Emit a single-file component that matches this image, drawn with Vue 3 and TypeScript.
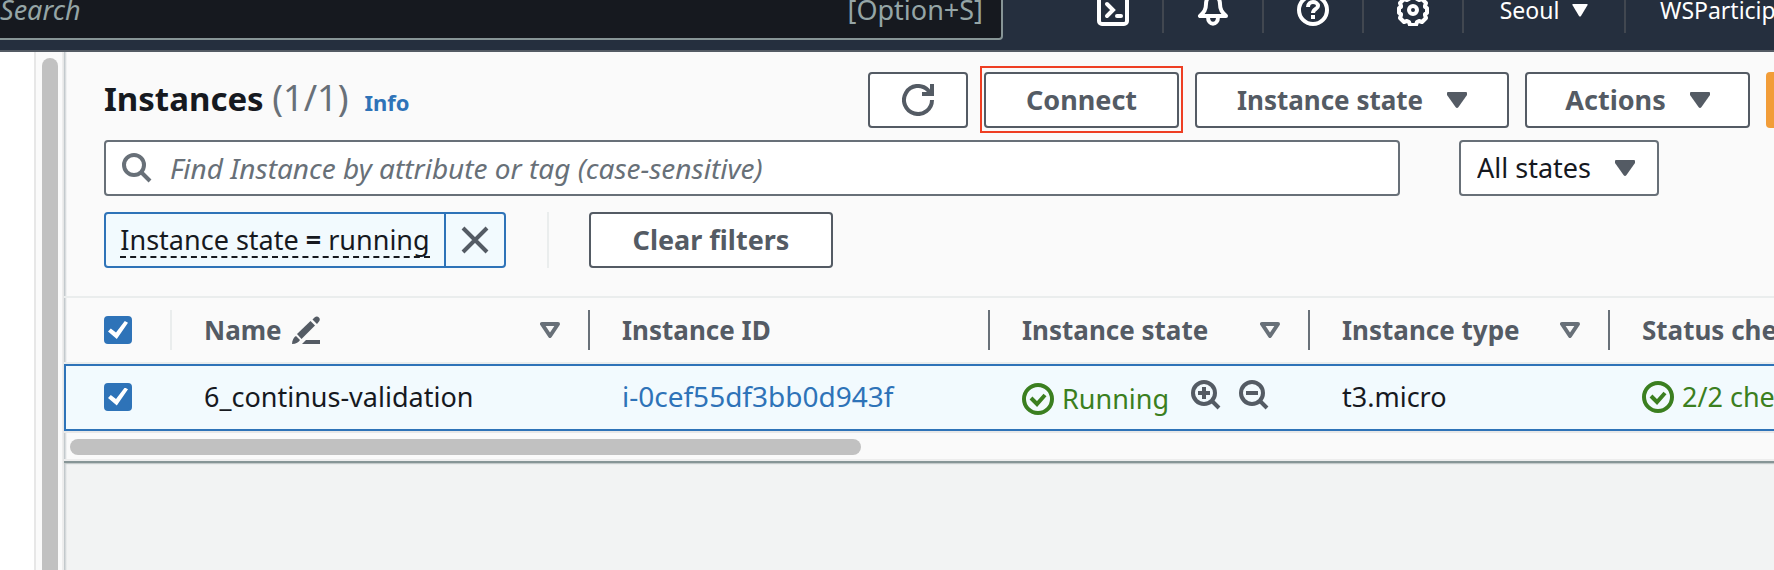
<script setup lang="ts">
import { ref } from 'vue'

interface Column {
  key: string
  label: string
  sortable: boolean
  editable?: boolean
}

const columns: Column[] = [
  { key: 'name', label: 'Name', sortable: true, editable: true },
  { key: 'id', label: 'Instance ID', sortable: false },
  { key: 'state', label: 'Instance state', sortable: true },
  { key: 'type', label: 'Instance type', sortable: true },
  { key: 'status', label: 'Status check', sortable: false },
]

const allSelected = ref(true)
const rowSelected = ref(true)
const query = ref('')
const stateFilter = ref('all')
</script>

<template>
  <div class="app">
    <header class="topbar">
      <div class="topbar-inner">
        <label class="global-search">
          <input type="search" placeholder="Search" aria-label="Search" />
          <span class="shortcut">[Option+S]</span>
        </label>
        <nav class="tools">
          <button class="tool" type="button" aria-label="CloudShell">
            <svg viewBox="0 0 32 32" width="32" height="32" fill="none" stroke="#fff" stroke-width="4">
              <rect x="2" y="2" width="28" height="28" rx="3" />
              <path d="M10 10l6 6-6 6" stroke-linecap="round" />
              <path d="M20 22h4" stroke-linecap="round" />
            </svg>
          </button>
          <button class="tool" type="button" aria-label="Notifications">
            <svg viewBox="0 0 32 32" width="32" height="32" fill="none" stroke="#fff" stroke-width="4" stroke-linejoin="round">
              <path d="M16 2c-5 0-7 4-7 8 0 6-2 8-6 12h26c-4-4-6-6-6-12 0-4-2-8-7-8z" />
              <path d="M11 23c0 9 10 9 10 0" />
            </svg>
          </button>
          <button class="tool" type="button" aria-label="Help">
            <svg viewBox="0 0 32 32" width="32" height="32" fill="none" stroke="#fff" stroke-width="4">
              <circle cx="16" cy="16" r="14" />
              <path d="M11 13c0-7 10-6 10-1 0 3-5 3-5 7" />
              <path d="M16 21v4" />
            </svg>
          </button>
          <button class="tool" type="button" aria-label="Settings">
            <svg viewBox="0 0 32 32" width="32" height="32" fill="none" stroke="#fff" stroke-width="4" stroke-linejoin="round">
              <path d="M13 2h6l1 3 2 1 3-1 4 4-1 3 0 1 2 1v5l-2 1 0 1 1 3-4 4-3-1-2 1-1 3h-6l-1-3-2-1-3 1-4-4 1-3 0-1-2-1v-5l2-1 0-1-1-3 4-4 3 1 2-1z" />
              <circle cx="16" cy="16" r="4" />
            </svg>
          </button>
          <button class="tool region" type="button">
            Seoul
            <svg viewBox="0 0 16 13" width="16" height="13" fill="#fff"><path d="M1 0h14q1 0 .6 1L9 12q-1 1-2 0L.4 1Q0 0 1 0z" /></svg>
          </button>
          <button class="tool account" type="button">WSParticipantRole</button>
        </nav>
      </div>
    </header>

    <div class="body">
      <aside class="side"><div class="side-track"><div class="side-thumb"></div></div></aside>

      <main class="content">
        <section class="panel">
          <div class="toolbar">
            <div class="title-row">
              <div class="title">
                <h1>Instances <span class="count">(1/1)</span></h1>
                <a class="info" href="#">Info</a>
              </div>
              <div class="actions">
                <button class="btn refresh" type="button" aria-label="Refresh">
                  <svg viewBox="0 0 32 32" width="32" height="32" fill="none" stroke="#545b64" stroke-width="4">
                    <path d="M30 16A14 14 0 1 1 26 6.200L29 10" />
                    <path d="M30 0v10H20" />
                  </svg>
                </button>
                <span class="highlight"><button class="btn connect" type="button">Connect</button></span>
                <button class="btn state-menu" type="button">
                  Instance state
                  <svg class="caret" viewBox="0 0 20 16" width="20" height="16"><path d="M1 0h18q1 0 1 1v2l-8.500 12q-1.500 2-3 0L0 3V1q0-1 1-1z" /></svg>
                </button>
                <button class="btn actions-menu" type="button">
                  Actions
                  <svg class="caret" viewBox="0 0 20 16" width="20" height="16"><path d="M1 0h18q1 0 1 1v2l-8.500 12q-1.500 2-3 0L0 3V1q0-1 1-1z" /></svg>
                </button>
                <button class="launch" type="button" aria-label="Launch instances"></button>
              </div>
            </div>

            <div class="search-row">
              <label class="search">
                <svg viewBox="0 0 30 30" width="30" height="30" fill="none" stroke="#687078" stroke-width="4">
                  <circle cx="12" cy="12" r="10" />
                  <path d="M19 19l9 9" />
                </svg>
                <input v-model="query" type="text" placeholder="Find Instance by attribute or tag (case-sensitive)" aria-label="Find Instance" />
              </label>
              <div class="select">
                <select v-model="stateFilter" aria-label="State">
                  <option value="all">All states</option>
                </select>
                <svg class="caret select-caret" viewBox="0 0 20 16" width="20" height="16"><path d="M1 0h18q1 0 1 1v2l-8.500 12q-1.500 2-3 0L0 3V1q0-1 1-1z" /></svg>
              </div>
            </div>

            <div class="filter-row">
              <div class="token">
                <button class="token-label" type="button"><span>Instance state <b>=</b> running</span></button>
                <button class="token-remove" type="button" aria-label="Remove filter">
                  <svg viewBox="0 0 28 28" width="28" height="28" fill="none" stroke="#545b64" stroke-width="4"><path d="M2 2l24 24M26 2L2 26" /></svg>
                </button>
              </div>
              <div class="filter-clear"><button class="btn clear" type="button">Clear filters</button></div>
            </div>
          </div>

          <div class="table-wrap">
            <table>
              <colgroup>
                <col class="w-check" /><col class="w-name" /><col class="w-id" /><col class="w-state" /><col class="w-type" /><col />
              </colgroup>
              <thead>
                <tr>
                  <th class="check-cell">
                    <div class="head light">
                      <input v-model="allSelected" type="checkbox" aria-label="Select all instances" />
                    </div>
                  </th>
                  <th v-for="col in columns" :key="col.key">
                    <div class="head">
                      <span>{{ col.label }}</span>
                      <svg v-if="col.editable" class="pencil" viewBox="0 0 28 28" width="28" height="28" fill="#545b64">
                        <path d="M0 28c0-4 2-7 4-8l4 4c-1 2-4 4-8 4z" />
                        <path d="M5 18L18.500 5l4.500 4.500L9.500 23z" />
                        <path d="M20.500 3.500l2-2c3-3 7 1 4.500 4l-2 2.500z" />
                        <path d="M14 24h14v4H10z" />
                      </svg>
                      <svg v-if="col.sortable" class="sort" viewBox="0 0 20 16" width="20" height="16" fill="none" stroke="#687078" stroke-width="4" stroke-linejoin="round">
                        <path d="M2 2h16l-8 12z" />
                      </svg>
                    </div>
                  </th>
                </tr>
              </thead>
              <tbody>
                <tr>
                  <td class="check-cell"><input v-model="rowSelected" type="checkbox" aria-label="Select 6_continus-validation" /></td>
                  <td>6_continus-validation</td>
                  <td><a class="instance-link" href="#">i-0cef55df3bb0d943f</a></td>
                  <td>
                    <div class="state">
                      <span class="ok">
                        <svg viewBox="0 0 32 32" width="32" height="32" fill="none" stroke="#3b7f20" stroke-width="4"><circle cx="16" cy="16" r="14" /><path d="M9 15l6 6 8-9" /></svg>
                        Running
                      </span>
                      <button class="zoom" type="button" aria-label="Filter by this value">
                        <svg viewBox="0 0 30 30" width="30" height="30" fill="none" stroke="#545b64" stroke-width="4"><circle cx="13" cy="13" r="11" /><path d="M21 21l7 7M7 13h12M13 7v12" /></svg>
                      </button>
                      <button class="zoom" type="button" aria-label="Exclude this value">
                        <svg viewBox="0 0 30 30" width="30" height="30" fill="none" stroke="#545b64" stroke-width="4"><circle cx="13" cy="13" r="11" /><path d="M21 21l7 7M7 13h12" /></svg>
                      </button>
                    </div>
                  </td>
                  <td>t3.micro</td>
                  <td>
                    <span class="ok">
                      <svg viewBox="0 0 32 32" width="32" height="32" fill="none" stroke="#3b7f20" stroke-width="4"><circle cx="16" cy="16" r="14" /><path d="M9 15l6 6 8-9" /></svg>
                      2/2 checks passed
                    </span>
                  </td>
                </tr>
              </tbody>
            </table>
          </div>
          <div class="hscroll"><div class="hscroll-thumb"></div></div>
        </section>
      </main>
    </div>
  </div>
</template>

<style>
body {
  margin: 0;
  overflow: hidden;
}
</style>

<style scoped>
.app {
  display: flex;
  flex-direction: column;
  height: 100vh;
  overflow: hidden;
  font-family: "Noto Sans", "Open Sans", sans-serif;
  font-size: 27px;
  line-height: 36px;
  color: #16191f;
}
.app * {
  box-sizing: border-box;
}
button,
input,
select {
  font: inherit;
  color: inherit;
  margin: 0;
}
button {
  padding: 0;
  border: 0;
  background: none;
  white-space: nowrap;
  cursor: pointer;
}
svg {
  display: block;
  flex: none;
}
a {
  color: #2e73b8;
  text-decoration: none;
}

/* Top navigation, scrolled partly out of view */
.topbar {
  display: flex;
  align-items: flex-end;
  flex: none;
  height: 52px;
  overflow: hidden;
  background: #252f3e;
  border-bottom: 2px solid #545b64;
}
.topbar-inner {
  display: flex;
  align-items: center;
  flex: 1;
  min-width: 0;
  height: 80px;
}
.global-search {
  display: flex;
  align-items: center;
  flex: 1;
  height: 60px;
  padding-right: 18px;
  background: #16191f;
  border: 2px solid #879596;
  border-left: 0;
  border-radius: 0 4px 4px 0;
  color: #95a5a6;
}
.global-search input {
  flex: 1;
  min-width: 0;
  padding: 0;
  border: 0;
  outline: 0;
  background: none;
}
.global-search input::placeholder {
  color: #95a5a6;
  font-style: italic;
  opacity: 1;
}
.tools {
  display: flex;
  align-items: center;
  width: 710px;
  margin-left: 61px;
  overflow: hidden;
  font-size: 23px;
  color: #fff;
}
.tool {
  display: flex;
  align-items: center;
  justify-content: center;
  flex: none;
  width: 100px;
  height: 46px;
  border-right: 2px solid #414750;
}
.region {
  width: 162px;
  gap: 13px;
}
.account {
  width: auto;
  padding-left: 34px;
  border-right: 0;
}

.body {
  display: flex;
  flex: 1;
  min-height: 0;
}
.side {
  display: flex;
  justify-content: flex-end;
  flex: none;
  width: 64px;
  background: #fff;
}
.side-track {
  width: 30px;
  padding: 6px 4px 0 6px;
  background: #fafafa;
  border-left: 2px solid #e7e7e7;
  border-right: 2px solid #ededed;
}
.side-thumb {
  width: 16px;
  height: 100%;
  background: #c1c1c1;
  border-radius: 8px 8px 0 0;
}

.content {
  flex: 1;
  min-width: 0;
  background: linear-gradient(90deg, #b9c0c4, transparent 3px) #f2f3f3;
}
.panel {
  background: linear-gradient(90deg, #b9c0c4, transparent 3px) #fafafa;
  border-bottom: 2px solid #879596;
  box-shadow: 0 1px 1px #c4caca;
}
.toolbar {
  display: flex;
  flex-direction: column;
  gap: 12px;
  padding: 20px 0 28px 40px;
}

.title-row {
  display: flex;
  align-items: center;
  height: 56px;
}
.title {
  display: flex;
  align-items: baseline;
  gap: 16px;
  padding-bottom: 4px;
}
h1 {
  margin: 0;
  font-size: 33px;
  line-height: 48px;
  font-weight: 700;
}
.count {
  font-size: 36px;
  font-weight: 400;
  color: #687078;
}
.info {
  font-size: 22px;
  font-weight: 700;
}
.actions {
  display: flex;
  align-items: center;
  gap: 16px;
  margin-left: auto;
}
.btn {
  display: flex;
  align-items: center;
  justify-content: center;
  height: 56px;
  background: #fff;
  border: 2px solid #545b64;
  border-radius: 4px;
  color: #545b64;
  font-weight: 700;
}
.refresh {
  width: 100px;
}
.highlight {
  padding: 4px 2px 3px;
  margin: -6px -4px -5px;
  border: 2px solid #ee3e23;
}
.connect {
  width: 195px;
}
.state-menu {
  width: 314px;
  gap: 24px;
  font-size: 26px;
}
.actions-menu {
  width: 225px;
  gap: 24px;
}
.caret {
  fill: #545b64;
}
.launch {
  width: 8px;
  height: 56px;
  background: #f29d38;
  border-radius: 4px 0 0 4px;
}

.search-row {
  display: flex;
  gap: 59px;
  padding-right: 115px;
}
.search {
  display: flex;
  align-items: center;
  flex: 1;
  gap: 18px;
  height: 56px;
  padding: 0 16px;
  background: #fff;
  border: 2px solid #687078;
  border-radius: 4px;
}
.search input {
  flex: 1;
  min-width: 0;
  padding: 0;
  border: 0;
  outline: 0;
  background: none;
  font-size: 28px;
}
.search input::placeholder {
  color: #687078;
  font-style: italic;
  opacity: 1;
}
.select {
  display: grid;
  align-items: center;
  width: 200px;
}
.select select {
  grid-area: 1 / 1;
  width: 100%;
  height: 56px;
  padding: 0 16px;
  appearance: none;
  background: #fff;
  border: 2px solid #687078;
  border-radius: 4px;
}
.select-caret {
  grid-area: 1 / 1;
  justify-self: end;
  margin-right: 24px;
  pointer-events: none;
}

.filter-row {
  display: flex;
  gap: 41px;
  padding-top: 4px;
}
.token {
  display: flex;
  height: 56px;
  background: #f2fafe;
  border: 2px solid #2e73b8;
  border-radius: 4px;
}
.token-label {
  width: 338px;
}
.token-label span {
  display: inline-block;
  line-height: 32px;
  border-bottom: 2px dashed #16191f;
}
.token-remove {
  display: grid;
  place-items: center;
  width: 60px;
  border-left: 2px solid #2e73b8;
}
.filter-clear {
  padding-left: 40px;
  border-left: 2px solid #eaeded;
}
.clear {
  width: 244px;
}

.table-wrap {
  overflow: hidden;
}
table {
  width: 100%;
  table-layout: fixed;
  border-collapse: separate;
  border-spacing: 0;
  white-space: nowrap;
}
.w-check { width: 108px; }
.w-name { width: 418px; }
.w-id { width: 400px; }
.w-state { width: 320px; }
.w-type { width: 300px; }
th,
td {
  padding: 0;
  text-align: left;
  overflow: hidden;
}
th {
  height: 68px;
  border-top: 2px solid #eaeded;
  border-bottom: 2px solid #eaeded;
  color: #545b64;
  font-size: 26px;
}
.head {
  display: flex;
  align-items: center;
  height: 40px;
  padding: 0 28px 0 32px;
  border-right: 2px solid #687078;
}
.head.light {
  padding-left: 40px;
  border-color: #eaeded;
}
th:last-child .head {
  border-right: 0;
}
.pencil {
  margin-left: 10px;
}
.sort {
  margin-left: auto;
}
td {
  height: 67px;
  padding: 0 0 2px 32px;
  background: #f2fafe;
  border-top: 2px solid #2e73b8;
  border-bottom: 2px solid #2e73b8;
}
td.check-cell {
  padding-left: 38px;
  border-left: 2px solid #2e73b8;
}
.instance-link {
  font-size: 28px;
}
input[type="checkbox"] {
  display: grid;
  place-items: center;
  width: 28px;
  height: 28px;
  appearance: none;
  background: #fff;
  border: 2px solid #687078;
  border-radius: 4px;
}
input[type="checkbox"]:checked {
  background: #2e73b8;
  border-color: #2e73b8;
}
input[type="checkbox"]:checked::after {
  content: "";
  width: 20px;
  height: 18px;
  background: #fff;
  clip-path: polygon(0 58%, 14% 42%, 40% 64%, 84% 0, 100% 10%, 44% 100%);
}
.state {
  display: flex;
  align-items: center;
}
.ok {
  display: flex;
  align-items: center;
  gap: 8px;
  color: #3b7f20;
}
.state .ok {
  margin-right: 22px;
  padding-top: 4px;
}
.zoom {
  margin-right: 18px;
  padding-bottom: 4px;
}

.hscroll {
  padding: 6px;
  height: 30px;
  border-top: 2px solid #e8e8e8;
  border-bottom: 2px solid #ededed;
}
.hscroll-thumb {
  width: 46.600%;
  height: 16px;
  background: #c1c1c1;
  border-radius: 8px;
}
</style>
